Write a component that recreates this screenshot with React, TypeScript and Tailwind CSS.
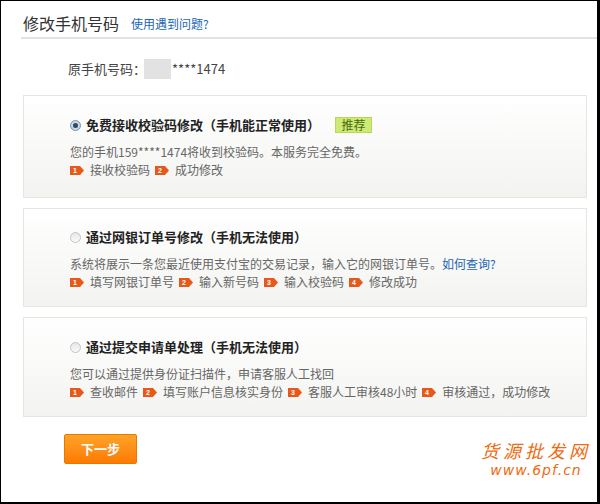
const font = { fontFamily: '"Noto Sans CJK SC", "Liberation Sans", sans-serif' };

function StepTag({ n }: { n: number }) {
  return (
    <svg width="14" height="9" viewBox="0 0 14 9" className="shrink-0">
      <polygon points="0,0 10,0 14,4.5 10,9 0,9" fill="#e8581a" />
      <text x="5" y="7.2" fontSize="7" fontWeight="bold" fill="#fff" textAnchor="middle" fontFamily="Liberation Sans, sans-serif">
        {n}
      </text>
    </svg>
  );
}

function Radio({ checked }: { checked?: boolean }) {
  return checked ? (
    <span className="flex h-[11px] w-[11px] shrink-0 items-center justify-center rounded-full border border-[#7d93a8] bg-[#c9d6e3]">
      <span className="h-[5px] w-[5px] rounded-full bg-[#2c4a68]" />
    </span>
  ) : (
    <span className="h-[11px] w-[11px] shrink-0 rounded-full border border-[#c4c4c4] bg-gradient-to-b from-[#e6e6e6] to-[#fafafa]" />
  );
}

function Steps({ items }: { items: string[] }) {
  return (
    <div className="flex h-[18px] items-center text-[12px] leading-[18px] text-[#666]">
      {items.map((s, i) => (
        <span key={i} className="mr-[5px] flex items-center gap-[6px]">
          <StepTag n={i + 1} />
          <span>{s}</span>
        </span>
      ))}
    </div>
  );
}

type Option = {
  title: string;
  checked?: boolean;
  badge?: boolean;
  desc: React.ReactNode;
  steps: string[];
  pad: string;
};

const options: Option[] = [
  {
    title: "免费接收校验码修改（手机能正常使用）",
    checked: true,
    badge: true,
    desc: "您的手机159****1474将收到校验码。本服务完全免费。",
    steps: ["接收校验码", "成功修改"],
    pad: "pt-[21px] pb-[18px]",
  },
  {
    title: "通过网银订单号修改（手机无法使用）",
    desc: (
      <>
        系统将展示一条您最近使用支付宝的交易记录，输入它的网银订单号。
        <span className="text-[#1a66b3]">如何查询?</span>
      </>
    ),
    steps: ["填写网银订单号", "输入新号码", "输入校验码", "修改成功"],
    pad: "pt-[20px] pb-[15px]",
  },
  {
    title: "通过提交申请单处理（手机无法使用）",
    desc: "您可以通过提供身份证扫描件，申请客服人工找回",
    steps: ["查收邮件", "填写账户信息核实身份", "客服人工审核48小时", "审核通过，成功修改"],
    pad: "pt-[21px] pb-[15px]",
  },
];

export default function App() {
  return (
    <div
      className="h-[504px] w-[600px] overflow-hidden border-b-2 border-l border-r-[3px] border-t border-black bg-white"
      style={font}
    >
      <div className="ml-[20px] flex h-[38px] items-end border-b-2 border-[#e2e2e2] pb-[4px] pl-[2px]">
        <span className="text-[16px] leading-[20px] text-[#333]">修改手机号码</span>
        <span className="ml-[12px] text-[12px] leading-[18px] text-[#1a66b3]">使用遇到问题?</span>
      </div>

      <div className="ml-[67px] mt-[20px] flex h-[20px] items-center text-[13px] text-[#444]">
        <span>原手机号码：</span>
        <span className="ml-[-2px] h-[20px] w-[27px] bg-[#e2e2e2]" />
        <span className="ml-[1px]">****1474</span>
      </div>

      <div className="ml-[22px] mt-[16px] flex w-[564px] flex-col gap-[10px]">
        {options.map((o, i) => (
          <div
            key={i}
            className={`border border-[#e6e6df] bg-gradient-to-b from-white to-[#f3f3f1] pl-[46px] ${o.pad}`}
          >
            <div className="flex h-[16px] items-center">
              <Radio checked={o.checked} />
              <span className="ml-[5px] text-[13px] font-bold leading-[16px] text-[#222]">{o.title}</span>
              {o.badge && (
                <span className="ml-[15px] flex h-[16px] w-[37px] items-center justify-center border border-[#b7d85a] bg-[#cdea74] text-[12px] text-[#4b6a12]">
                  推荐
                </span>
              )}
            </div>
            <div className="mt-[10px] h-[18px] text-[12px] leading-[18px] text-[#666]">{o.desc}</div>
            <Steps items={o.steps} />
          </div>
        ))}
      </div>

      <div className="flex items-start">
        <button className="ml-[63px] mt-[17px] flex h-[30px] w-[73px] items-center justify-center rounded-[2px] border border-[#e67a00] bg-gradient-to-b from-[#ffa326] to-[#ff7a00] text-[13px] font-bold text-white">
          下一步
        </button>
        <div className="ml-auto mr-[6px] mt-[22px] flex flex-col items-center text-[#f06a10]" style={{ fontFamily: '"DejaVu Sans", sans-serif' }}>
          <span className="text-[18px] leading-[22px] tracking-[4px] italic" style={font}>货源批发网</span>
          <span className="text-[14px] italic leading-[18px] tracking-[1px]">www.6pf.cn</span>
        </div>
      </div>
    </div>
  );
}
